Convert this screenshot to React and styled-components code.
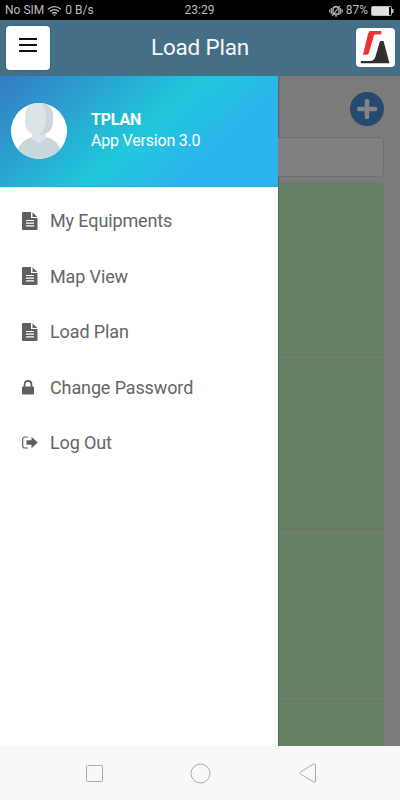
import React from "react";
import styled, { createGlobalStyle } from "styled-components";

const GlobalStyle = createGlobalStyle`
  * {
    box-sizing: border-box;
  }
  body {
    margin: 0;
    font-family: Roboto, "Liberation Sans", sans-serif;
  }
`;

const Phone = styled.div`
  display: flex;
  flex-direction: column;
  width: 400px;
  height: 800px;
  overflow: hidden;
  background-color: white;
`;

const StatusBar = styled.div`
  display: grid;
  grid-template-columns: 1fr auto 1fr;
  align-items: center;
  height: 20px;
  padding: 1px 6px 0 5px;
  background-color: black;
  color: #bdbdbd;
  font-size: 12px;
  line-height: 19px;
  white-space: nowrap;
`;

const StatusGroup = styled.div`
  display: flex;
  align-items: center;
  justify-content: ${(props) => (props.$end ? "flex-end" : "flex-start")};
  gap: 3px;
`;

const StatusText = styled.span`
  color: #bdbdbd;
`;

const AppBar = styled.header`
  display: flex;
  align-items: center;
  justify-content: space-between;
  height: 56px;
  padding: 0 5px 0 6px;
  background-color: #456f87;
`;

const MenuButton = styled.button`
  display: flex;
  align-items: center;
  justify-content: center;
  width: 44px;
  height: 44px;
  padding: 0 0 6px;
  border: none;
  border-radius: 4px;
  background-color: white;
  box-shadow: 0 0 1px 1px #2b6f8c;
`;

const Title = styled.h1`
  margin: 0 6px 2px 0;
  color: #f4f8fa;
  font-size: 22.5px;
  font-weight: 400;
  letter-spacing: -0.2px;
`;

const Logo = styled.div`
  width: 39px;
  height: 39px;
  margin-bottom: 1px;
  border-radius: 4px;
  background-color: white;
`;

const Body = styled.div`
  display: flex;
  height: 670px;
`;

const Drawer = styled.aside`
  width: 278px;
  background-color: white;
`;

const Profile = styled.div`
  display: flex;
  align-items: center;
  gap: 24px;
  height: 111px;
  padding: 0 11px;
  border-bottom: 1px solid #1faedb;
  background-image: linear-gradient(
    138.5deg,
    #347bc5 0%,
    #20c8db 51.5%,
    #2cb4ec 75%,
    #2cb4ec 100%
  );
`;

const Avatar = styled.div`
  width: 56px;
  height: 56px;
  overflow: hidden;
  border-radius: 50%;
  background-color: white;
`;

const ProfileInfo = styled.div`
  padding-bottom: 2px;
`;

const ProfileText = styled.p`
  margin: 0;
  color: white;
  font-size: 16px;
  font-weight: ${(props) => (props.$bold ? 700 : 400)};
  line-height: 21px;
  letter-spacing: -0.2px;
`;

const MenuList = styled.ul`
  margin: 0;
  padding: 6px 0 0;
  list-style: none;
`;

const MenuItem = styled.li`
  display: flex;
  align-items: center;
  height: 55.5px;
  padding-left: 22px;
  color: #666;
  font-size: 18px;
  letter-spacing: -0.12px;
`;

const MenuIcon = styled.span`
  display: flex;
  width: 28px;
`;

const Page = styled.main`
  flex: 1;
  display: flex;
  flex-direction: column;
  padding: 16px 16.5px 0 0;
  overflow: hidden;
  background-color: #7b7b7b;
  box-shadow: inset 2px 0 2px -1px rgba(0, 0, 0, 0.25);
`;

const AddButton = styled.button`
  flex: none;
  display: flex;
  align-self: flex-end;
  align-items: center;
  justify-content: center;
  width: 33.5px;
  height: 34px;
  padding: 0;
  border: none;
  border-radius: 50%;
  background-color: #264970;
`;

const SearchBox = styled.div`
  flex: none;
  height: 40px;
  margin: 11px 0 5px;
  border: 1px solid #707070;
  border-left: none;
  border-radius: 0 4px 4px 0;
  background-color: #808080;
`;

const PlanRow = styled.div`
  flex: none;
  height: 173.3px;
  border-bottom: 1.5px solid #6b736b;
  background-color: #678167;
  box-shadow: inset 2px 0 1px -1px #4d6d50;
`;

const NavBar = styled.nav`
  display: flex;
  align-items: center;
  justify-content: space-between;
  height: 54px;
  padding: 0 83px 0 86px;
  background-color: #f8f8f8;
`;

const WifiIcon = () => (
  <svg width="15" height="12" viewBox="0 0 15 12" fill="none" stroke="#bdbdbd">
    <path d="M1 4.3Q7.5 -1 14 4.3M3 6.4Q7.5 2.8 12 6.4M5 8.5Q7.5 6.6 10 8.5" strokeWidth="1.4" />
    <path d="M6.1 9.6h2.8L7.5 11.2z" fill="#bdbdbd" stroke="none" />
  </svg>
);

const VibrateIcon = () => (
  <svg width="14" height="12" viewBox="0 0 14 12" fill="none" stroke="#bdbdbd">
    <path d="M4 9V4Q4 2 7 1.5Q10 2 10 4V9zM5.8 10.8h2.4" strokeWidth="1.3" />
    <path d="M2.3 3v6M11.7 3v6M.7 4.5v3M13.3 4.5v3" strokeWidth="1.1" />
    <path d="M3 11L11 1" strokeWidth="1.2" />
  </svg>
);

const BatteryIcon = () => (
  <svg width="23" height="10" viewBox="0 0 23 10">
    <rect x="0.5" y="0.5" width="20" height="9" rx="1" fill="none" stroke="#bdbdbd" />
    <rect x="1" y="1" width="17" height="8" fill="#e0e0e0" />
    <path d="M21 3h1.5v4H21z" fill="#bdbdbd" />
  </svg>
);

const HamburgerIcon = () => (
  <svg width="18" height="14" viewBox="0 0 18 14" fill="#111">
    <path d="M0 0h18v2H0zM0 6h18v2H0zM0 12h18v2H0z" />
  </svg>
);

const LogoMark = () => (
  <svg width="39" height="39" viewBox="0 0 39 39">
    <path d="M13.5 3H25q.8 1.5 0 3.5H18.3L12.5 26Q10 27.3 7 26.6L12 6z" fill="#ee3135" />
    <path d="M24.5 13h3L33.5 35.2H5q-.6-1.5 0-2.2h9q4-.2 5.5-4.5l4-14z" fill="#303030" />
  </svg>
);

const Person = () => (
  <svg width="56" height="56" viewBox="0 0 56 56">
    <path d="M6 48Q10 37 21 34H35Q47 37 50 48V56H6z" fill="#c9d6dc" />
    <path d="M21 29h14v7l-7 4.5-7-4.5z" fill="#dbe3e7" />
    <path d="M14 13Q14 0 28 0Q42 0 42 13V18Q42 32 28 32Q14 32 14 18z" fill="#dde4e8" />
    <path d="M29 0Q42 1 42 14V18Q42 31 27 32Q35 28 35 15Q35 4 29 0z" fill="#ccd6db" />
  </svg>
);

const DocumentIcon = () => (
  <svg width="16" height="18" viewBox="0 0 16 18">
    <path d="M1 0H9V6H15.5V17Q15.5 18 14.5 18H1Q0 18 0 17V1Q0 0 1 0z" fill="#606060" />
    <path d="M10.5 .3L15.3 5H10.5z" fill="#606060" />
    <path d="M4 8.5h8M4 11.2h8M4 13.9h8" stroke="white" strokeWidth="1.2" />
  </svg>
);

const LockIcon = () => (
  <svg width="12" height="15" viewBox="0 0 12 15">
    <rect y="6.5" width="12" height="8" rx="0.8" fill="#606060" />
    <path d="M2.6 7V4.3Q2.6 1 6 1Q9.4 1 9.4 4.3V7" fill="none" stroke="#606060" strokeWidth="1.8" />
  </svg>
);

const LogoutIcon = () => (
  <svg width="16" height="13" viewBox="0 0 16 13">
    <path d="M6 1H3Q.7 1 .7 3.3V9.7Q.7 12 3 12H6" fill="none" stroke="#606060" strokeWidth="1.2" />
    <path d="M4.5 4.2H9.5V.8L15.7 6.5L9.5 12.2V8.8H4.5z" fill="#606060" />
  </svg>
);

const menuItems = [
  { name: "My Equipments", icon: <DocumentIcon /> },
  { name: "Map View", icon: <DocumentIcon /> },
  { name: "Load Plan", icon: <DocumentIcon /> },
  { name: "Change Password", icon: <LockIcon /> },
  { name: "Log Out", icon: <LogoutIcon /> },
];

const App = () => {
  return (
    <>
      <GlobalStyle />
      <Phone>
        <StatusBar>
          <StatusGroup>
            <StatusText>No SIM</StatusText>
            <WifiIcon />
            <StatusText>0 B/s</StatusText>
          </StatusGroup>
          <StatusText>23:29</StatusText>
          <StatusGroup $end>
            <VibrateIcon />
            <StatusText>87%</StatusText>
            <BatteryIcon />
          </StatusGroup>
        </StatusBar>
        <AppBar>
          <MenuButton type="button" aria-label="Menu">
            <HamburgerIcon />
          </MenuButton>
          <Title>Load Plan</Title>
          <Logo>
            <LogoMark />
          </Logo>
        </AppBar>
        <Body>
          <Drawer>
            <Profile>
              <Avatar>
                <Person />
              </Avatar>
              <ProfileInfo>
                <ProfileText $bold>TPLAN</ProfileText>
                <ProfileText>App Version 3.0</ProfileText>
              </ProfileInfo>
            </Profile>
            <MenuList>
              {menuItems.map((item) => (
                <MenuItem key={item.name}>
                  <MenuIcon>{item.icon}</MenuIcon>
                  {item.name}
                </MenuItem>
              ))}
            </MenuList>
          </Drawer>
          <Page>
            <AddButton type="button" aria-label="Add">
              <svg width="20" height="20" viewBox="0 0 20 20">
                <path d="M10 2v16M2 10h16" stroke="#838383" strokeWidth="4.5" strokeLinecap="round" />
              </svg>
            </AddButton>
            <SearchBox />
            <PlanRow />
            <PlanRow />
            <PlanRow />
            <PlanRow />
          </Page>
        </Body>
        <NavBar>
          <svg width="17" height="17" viewBox="0 0 17 17" fill="none" stroke="#ababab">
            <rect x="0.5" y="0.5" width="16" height="16" rx="1" />
          </svg>
          <svg width="23" height="21" viewBox="0 0 23 21" fill="none" stroke="#ababab">
            <circle cx="10.5" cy="10.5" r="9.5" />
          </svg>
          <svg width="18" height="20" viewBox="0 0 18 20" fill="none" stroke="#ababab">
            <path d="M1.2 9.2L14.8 .9Q16.5 .3 16.5 2V18Q16.5 19.7 14.8 19.1L1.2 10.8Q.2 10 1.2 9.2z" />
          </svg>
        </NavBar>
      </Phone>
    </>
  );
};

export default App;
